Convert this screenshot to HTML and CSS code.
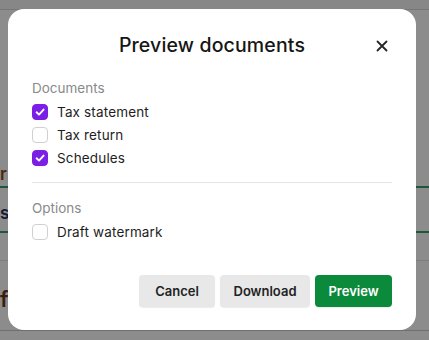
FILE: index.html
```html
<!DOCTYPE html>
<html>
<head>
<meta charset="utf-8">
<link rel="stylesheet" href="styles.css">
</head>
<body>
<div class="page">
  <div class="topbar"></div>
  <div class="rows">
    <div class="row"><span class="frag frag-r">r</span></div>
    <div class="row"><span class="frag frag-s">s</span></div>
    <div class="row row-tall"></div>
    <div class="row row-last"><span class="frag frag-f">f</span></div>
  </div>
</div>
<div class="overlay"></div>
<div class="modal">
  <div class="modal-header">
    <h1 class="modal-title">Preview documents</h1>
    <button class="close" aria-label="Close">
      <svg width="12" height="12" viewBox="0 0 12 12"><path d="M1.5 1.5 L10.5 10.5 M10.5 1.5 L1.5 10.5" stroke="#262626" stroke-width="1.8" stroke-linecap="round"/></svg>
    </button>
  </div>
  <div class="section">
    <div class="section-label">Documents</div>
    <label class="check"><span class="box checked"><svg width="12" height="12" viewBox="0 0 12 12"><path d="M2.6 6.3 L5 8.6 L9.6 3.6" fill="none" stroke="#fff" stroke-width="1.9" stroke-linecap="round" stroke-linejoin="round"/></svg></span>Tax statement</label>
    <label class="check"><span class="box"></span>Tax return</label>
    <label class="check"><span class="box checked"><svg width="12" height="12" viewBox="0 0 12 12"><path d="M2.6 6.3 L5 8.6 L9.6 3.6" fill="none" stroke="#fff" stroke-width="1.9" stroke-linecap="round" stroke-linejoin="round"/></svg></span>Schedules</label>
  </div>
  <hr class="divider">
  <div class="section">
    <div class="section-label">Options</div>
    <label class="check"><span class="box"></span>Draft watermark</label>
  </div>
  <div class="actions">
    <button class="btn btn-cancel">Cancel</button>
    <button class="btn btn-download">Download</button>
    <button class="btn btn-primary">Preview</button>
  </div>
</div>
</body>
</html>
```
FILE: styles.css
```css
* { box-sizing: border-box; }
html, body { margin: 0; padding: 0; }
body {
  width: 429px;
  height: 340px;
  overflow: hidden;
  background: #fff;
  font-family: Inter, "Liberation Sans", Arial, sans-serif;
  position: relative;
}
.page { display: flex; flex-direction: column; height: 340px; }
.topbar { height: 10px; border-bottom: 1px solid #d8d8d8; background: #f6f6f6; }
.rows { display: flex; flex-direction: column; }
.row { height: 45px; border-bottom: 2px solid #3a9f72; position: relative; }
.row:first-child { height: 178px; }
.row-tall { height: 28px; border-bottom: 1px solid #e6e6e6; }
.row-last { height: 70px; border-bottom: 1px solid #ccc; }
.frag { position: absolute; left: 0; font-size: 17px; font-weight: 600; }
.frag-r { bottom: 2px; color: #8a4a20; }
.frag-s { bottom: 8px; color: #2c3460; }
.frag-f { bottom: 18px; color: #6a3a1a; font-size: 22px; }
.overlay { position: absolute; inset: 0; background: rgba(0,0,0,0.45); }
.modal {
  position: absolute;
  left: 8px; top: 9px;
  width: 408px; height: 321px;
  background: #fff;
  border-radius: 16px;
  padding: 22px 24px 23px 24px;
  display: flex;
  flex-direction: column;
}
.modal-header {
  height: 28px;
  display: flex;
  align-items: center;
  justify-content: center;
  position: relative;
}
.modal-title {
  margin: 0;
  font-size: 19.5px;
  font-weight: 500;
  color: #161616;
  letter-spacing: 0.15px;
}
.close {
  position: absolute;
  right: 3px; top: 8px;
  width: 14px; height: 14px;
  padding: 0; border: 0; background: none;
  display: flex; align-items: center; justify-content: center;
}
.section { display: flex; flex-direction: column; }
.modal-header + .section { margin-top: 21px; }
.section-label {
  font-size: 13.5px;
  line-height: 16px;
  color: #8a8a8a;
  margin-bottom: 4px;
}
.check {
  display: flex;
  align-items: center;
  gap: 9px;
  height: 23px;
  font-size: 13.5px;
  color: #1e1e1e;
  letter-spacing: 0.15px;
}
.box {
  width: 16px; height: 16px;
  border: 1px solid #d0d0d0;
  border-radius: 4px;
  background: #fff;
  display: flex; align-items: center; justify-content: center;
  flex: none;
}
.box.checked { background: #7b1fe6; border-color: #7b1fe6; }
.divider {
  margin: 13px 0 17px 0;
  border: 0;
  border-top: 1px solid #e4e4e4;
  height: 0;
}
.actions {
  margin-top: auto;
  display: flex;
  justify-content: flex-end;
  gap: 5px;
}
.btn {
  height: 32px;
  border: 0;
  border-radius: 4px;
  font-family: inherit;
  font-size: 13px;
  font-weight: 600;
  color: #222;
  background: #e8e8e8;
  box-shadow: 0 1px 1px rgba(0,0,0,0.08);
}
.btn-cancel { width: 76px; }
.btn-download { width: 90px; }
.btn-primary { width: 77px; background: #0a8a3a; color: #fff; }
```
